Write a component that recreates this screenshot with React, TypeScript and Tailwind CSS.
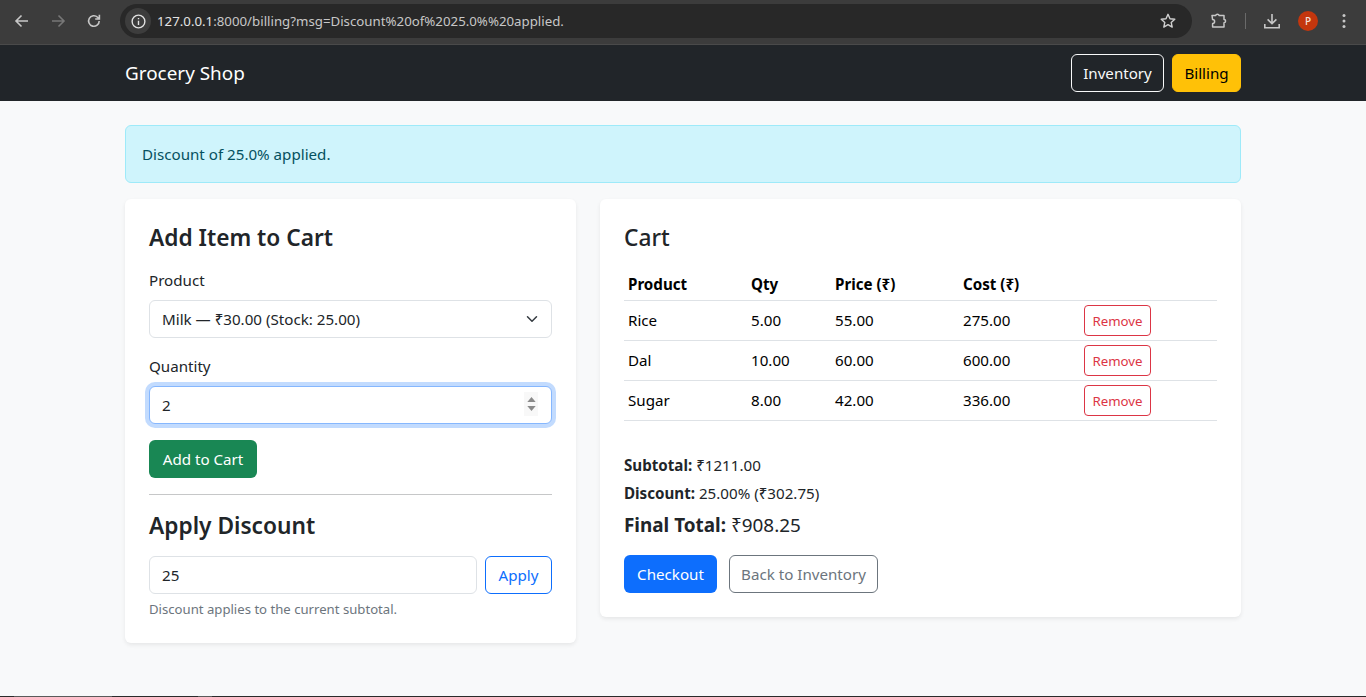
const FONT = "font-['Noto_Sans',sans-serif]";

const rows = [
  { name: 'Rice', qty: '5.00', price: '55.00', cost: '275.00' },
  { name: 'Dal', qty: '10.00', price: '60.00', cost: '600.00' },
  { name: 'Sugar', qty: '8.00', price: '42.00', cost: '336.00' },
];

function BrowserBar() {
  return (
    <div className="flex h-[45px] items-center border-b border-[#4a4a4a] bg-[#3c3c3c] pb-[2px] text-[#c7c7c7]">
      <div className="flex w-[120px] items-center gap-[18px] pl-[13px]">
        <svg width="18" height="18" viewBox="0 0 18 18" fill="none" stroke="currentColor" strokeWidth="1.6">
          <path d="M15 9H3.5M8.5 3.5 3 9l5.5 5.5" />
        </svg>
        <svg width="18" height="18" viewBox="0 0 18 18" fill="none" stroke="#777" strokeWidth="1.6">
          <path d="M3 9h11.5M9.5 3.5 15 9l-5.5 5.5" />
        </svg>
        <svg width="18" height="18" viewBox="0 0 18 18" fill="none" stroke="currentColor" strokeWidth="1.6">
          <path d="M14.2 9a5.3 5.3 0 1 1-1.6-3.8l1.6 1.6M14.4 2.8v4.2h-4.2" />
        </svg>
      </div>
      <div className="flex h-[34px] w-[1072px] items-center rounded-full bg-[#282828] pl-[5px] pr-[15px]">
        <span className="flex size-[26px] items-center justify-center rounded-full bg-[#3d3d3d]">
          <svg width="17" height="17" viewBox="0 0 16 16" fill="none" stroke="#e3e3e3" strokeWidth="1.3">
            <circle cx="8" cy="8" r="6" />
            <path d="M8 7.2v4M8 4.6v1.3" />
          </svg>
        </span>
        <span className="ml-[6px] text-[13.27px] text-[#c7c7c7]">
          <span className="text-[#e3e3e3]">127.0.0.1</span>:8000/billing?msg=Discount%20of%2025.0%%20applied.
        </span>
        <svg className="ml-auto" width="18" height="18" viewBox="0 0 18 18" fill="none" stroke="#d0d0d0" strokeWidth="1.4">
          <path d="m9 2.3 2 4.4 4.8.5-3.6 3.2 1 4.7L9 12.7l-4.2 2.4 1-4.7L2.2 7.2 7 6.7z" strokeLinejoin="round" />
        </svg>
      </div>
      <div className="flex flex-1 items-center pl-[18px]">
        <svg width="18" height="18" viewBox="0 0 18 18" fill="none" stroke="#c7c7c7" strokeWidth="1.5" strokeLinejoin="round">
          <path d="M2 3.5h3.6a1.9 1.9 0 0 1 3.6 0H14v4a1.6 1.6 0 0 1 0 3.2V15H2.6v-3.4a2 2 0 0 0 0-4z" />
        </svg>
        <span className="ml-[17px] h-[16px] w-px bg-[#6a6a6a]" />
        <svg className="ml-[17px]" width="18" height="18" viewBox="0 0 18 18" fill="none" stroke="#c7c7c7" strokeWidth="1.6">
          <path d="M9 2v9.5M4.6 7.4 9 11.6l4.4-4.2M1.8 12v3.7h14.4V12" />
        </svg>
        <span className="ml-[17px] flex size-5 items-center justify-center rounded-full bg-[#c4360d] text-[10px] font-medium text-[#f5e3dc]">
          P
        </span>
        <svg className="ml-[24px]" width="4" height="16" viewBox="0 0 4 16" fill="#c7c7c7">
          <circle cx="2" cy="2.5" r="1.5" />
          <circle cx="2" cy="8" r="1.5" />
          <circle cx="2" cy="13.5" r="1.5" />
        </svg>
      </div>
    </div>
  );
}

function Navbar() {
  return (
    <nav className="h-14 bg-[#212529]">
      <div className="mx-auto flex h-full w-[1116px] items-center justify-between">
        <span className="text-[18.9px] text-white">Grocery Shop</span>
        <div className="flex gap-2">
          <a className="flex h-[38px] w-[93px] items-center justify-center rounded-md border border-[#f8f9fa] text-[#f8f9fa]">Inventory</a>
          <a className="flex h-[38px] w-[69px] items-center justify-center rounded-md border border-[#ffc107] bg-[#ffc107] text-black">Billing</a>
        </div>
      </div>
    </nav>
  );
}

function AddItemCard() {
  return (
    <div className="w-[451px] rounded-md bg-white p-6 shadow-[0_2px_4px_rgba(0,0,0,0.075)]">
      <h4 className="mb-4 pt-[2px] text-[22.7px] leading-[26.8px] font-semibold">Add Item to Cart</h4>
      <label className="mb-2 block pt-px leading-[23px]">Product</label>
      <div className="relative mb-4">
        <select className="h-[38px] w-full appearance-none rounded-md border border-[#dee2e6] bg-white px-3 text-[#212529]">
          <option>Milk — ₹30.00 (Stock: 25.00)</option>
        </select>
        <svg
          className="pointer-events-none absolute top-[13px] right-[14px]"
          width="12"
          height="12"
          viewBox="0 0 16 16"
          fill="none"
          stroke="#343a40"
          strokeWidth="2"
          strokeLinecap="round"
          strokeLinejoin="round"
        >
          <path d="m2 5 6 6 6-6" />
        </svg>
      </div>
      <label className="mb-2 block pt-px leading-[23px]">Quantity</label>
      <div className="relative mb-4">
        <input
          readOnly
          value="2"
          className="h-[38px] w-full rounded-md border border-[#86b7fe] bg-white px-3 shadow-[0_0_0_4px_rgba(13,110,253,0.25)] outline-none"
        />
        <div className="absolute top-[6px] right-[14px] flex h-[24px] w-[14px] flex-col items-center justify-center gap-[4px] bg-[#f8f8f8]">
          <svg width="9" height="5" viewBox="0 0 10 6" fill="#8a8a8a">
            <path d="M5 0 10 6H0z" />
          </svg>
          <svg width="9" height="5" viewBox="0 0 10 6" fill="#8a8a8a">
            <path d="M5 6 0 0h10z" />
          </svg>
        </div>
      </div>
      <button className="h-[38px] w-[108px] rounded-md bg-[#198754] text-white">Add to Cart</button>
      <hr className="my-4 border-t border-[#c6c7c8]" />
      <h4 className="mb-4 pt-[2px] text-[22.7px] leading-[26.8px] font-semibold">Apply Discount</h4>
      <div className="flex gap-2">
        <input
          readOnly
          value="25"
          className="h-[38px] min-w-0 flex-1 rounded-md border border-[#dee2e6] bg-white px-3 outline-none"
        />
        <button className="h-[38px] w-[67px] rounded-md border border-[#0d6efd] text-[#0d6efd]">Apply</button>
      </div>
      <div className="mt-1 pt-px text-[13.15px] leading-[20px] text-[#6c757d]">Discount applies to the current subtotal.</div>
    </div>
  );
}

function CartCard() {
  return (
    <div className="w-[641px] rounded-md bg-white p-6 shadow-[0_2px_4px_rgba(0,0,0,0.075)]">
      <h4 className="mb-4 pt-[2px] text-[22.7px] leading-[26.8px] font-medium">Cart</h4>
      <table className="mb-4 w-[593px] table-fixed border-collapse text-left text-black">
        <colgroup>
          <col className="w-[123px]" />
          <col className="w-[84px]" />
          <col className="w-[128px]" />
          <col className="w-[121px]" />
          <col className="w-[137px]" />
        </colgroup>
        <thead>
          <tr className="border-b border-[#dee2e6]">
            <th className="p-1 font-bold">Product</th>
            <th className="p-1 font-bold">Qty</th>
            <th className="p-1 font-bold">Price (₹)</th>
            <th className="p-1 font-bold">Cost (₹)</th>
            <th className="p-1" />
          </tr>
        </thead>
        <tbody>
          {rows.map((r) => (
            <tr key={r.name} className="border-b border-[#dee2e6]">
              <td className="p-1">{r.name}</td>
              <td className="p-1">{r.qty}</td>
              <td className="p-1">{r.price}</td>
              <td className="p-1">{r.cost}</td>
              <td className="p-1">
                <button className="block h-[31px] w-[67px] rounded border border-[#dc3545] pt-px text-[13.25px] text-[#dc3545]">Remove</button>
              </td>
            </tr>
          ))}
        </tbody>
      </table>
      <p className="mt-8 mb-1 pt-px leading-[23px]">
        <b>Subtotal:</b> ₹1211.00
      </p>
      <p className="mb-1">
        <b>Discount:</b> 25.00% (₹302.75)
      </p>
      <p className="mt-1 mb-4 pt-[2px] text-[18.9px] leading-[28px]">
        <b>Final Total:</b> ₹908.25
      </p>
      <div className="flex gap-3">
        <button className="h-[38px] w-[93px] rounded-md bg-[#0d6efd] text-white">Checkout</button>
        <button className="h-[38px] w-[149px] rounded-md border border-[#6c757d] text-[#6c757d]">Back to Inventory</button>
      </div>
    </div>
  );
}

// bottom edge of the window behind the page
function BottomEdge() {
  return (
    <div className="flex h-px bg-[#2b2b2b]">
      <span className="ml-[14px] w-[98px] bg-[#5a5a5a]" />
      <span className="ml-[86px] w-[14px] bg-[#5a5a5a]" />
    </div>
  );
}

export default function App() {
  return (
    <div className={`${FONT} flex h-[697px] flex-col overflow-hidden bg-[#f8f9fa] text-[15.15px] leading-6 text-[#212529]`}>
      <BrowserBar />
      <Navbar />
      <main className="mx-auto w-[1116px] flex-1 pt-6">
        <div className="mb-4 rounded-md border border-[#9eeaf9] bg-[#cff4fc] p-4 text-[#055160]">Discount of 25.0% applied.</div>
        <div className="flex items-start gap-6">
          <AddItemCard />
          <CartCard />
        </div>
      </main>
      <BottomEdge />
    </div>
  );
}
